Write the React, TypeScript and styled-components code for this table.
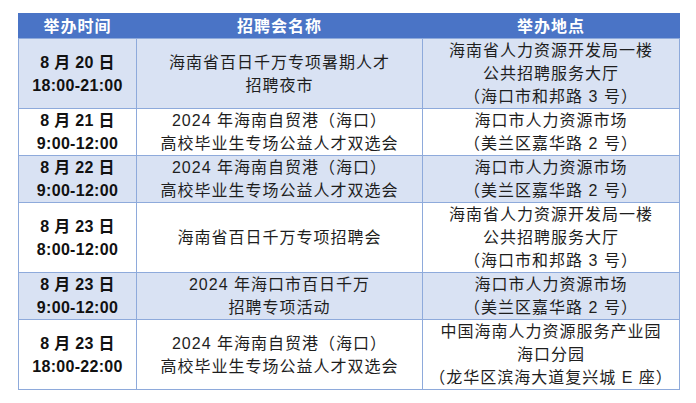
import styled, { createGlobalStyle } from "styled-components";

type Fair = {
    date: string;
    time: string;
    name: string[];
    place: string[];
};

const fairs: Fair[] = [
    {
        date: "8 月 20 日",
        time: "18:00-21:00",
        name: ["海南省百日千万专项暑期人才", "招聘夜市"],
        place: ["海南省人力资源开发局一楼", "公共招聘服务大厅", "（海口市和邦路 3 号）"],
    },
    {
        date: "8 月 21 日",
        time: "9:00-12:00",
        name: ["2024 年海南自贸港（海口）", "高校毕业生专场公益人才双选会"],
        place: ["海口市人力资源市场", "（美兰区嘉华路 2 号）"],
    },
    {
        date: "8 月 22 日",
        time: "9:00-12:00",
        name: ["2024 年海南自贸港（海口）", "高校毕业生专场公益人才双选会"],
        place: ["海口市人力资源市场", "（美兰区嘉华路 2 号）"],
    },
    {
        date: "8 月 23 日",
        time: "8:00-12:00",
        name: ["海南省百日千万专项招聘会"],
        place: ["海南省人力资源开发局一楼", "公共招聘服务大厅", "（海口市和邦路 3 号）"],
    },
    {
        date: "8 月 23 日",
        time: "9:00-12:00",
        name: ["2024 年海口市百日千万", "招聘专项活动"],
        place: ["海口市人力资源市场", "（美兰区嘉华路 2 号）"],
    },
    {
        date: "8 月 23 日",
        time: "18:00-22:00",
        name: ["2024 年海南自贸港（海口）", "高校毕业生专场公益人才双选会"],
        place: ["中国海南人力资源服务产业园", "海口分园", "（龙华区滨海大道复兴城 E 座）"],
    },
];

const GlobalStyle = createGlobalStyle`
    body {
        margin: 0;
        background: #ffffff;
        font-family: "Liberation Sans", "Noto Sans CJK SC", sans-serif;
    }
`;

function Lines({ items }: { items: string[] }) {
    return (
        <>
            {items.map((line, i) => (
                <Line key={i}>{line}</Line>
            ))}
        </>
    );
}

export default function App() {
    return (
        <>
            <GlobalStyle />
            <Page>
                <Table>
                    <colgroup>
                        <col style={{ width: 118 }} />
                        <col style={{ width: 286 }} />
                        <col style={{ width: 257 }} />
                    </colgroup>
                    <thead>
                        <tr>
                            <HeadCell>举办时间</HeadCell>
                            <HeadCell>招聘会名称</HeadCell>
                            <HeadCell>举办地点</HeadCell>
                        </tr>
                    </thead>
                    <tbody>
                        {fairs.map((fair, i) => (
                            <Row key={i} $shaded={i % 2 === 0}>
                                <TimeCell>
                                    <Line>{fair.date}</Line>
                                    <Line>{fair.time}</Line>
                                </TimeCell>
                                <Cell>
                                    <Lines items={fair.name} />
                                </Cell>
                                <Cell>
                                    <Lines items={fair.place} />
                                </Cell>
                            </Row>
                        ))}
                    </tbody>
                </Table>
            </Page>
        </>
    );
}

const Page = styled.div`
    padding: 13px 0 0 18px;
`;

const Table = styled.table`
    width: 661px;
    table-layout: fixed;
    border-collapse: collapse;
    border: 1px solid #8eaadb;
    color: #1e1e1e;
    font-size: 16px;
`;

const HeadCell = styled.th`
    background: #4a74c6;
    color: #ffffff;
    font-weight: bold;
    letter-spacing: 1px;
    line-height: 23px;
    height: 24px;
    padding: 0;
    text-align: center;
    border: 1px solid #4a74c6;
    border-bottom-color: #8eaadb;
`;

const Row = styled.tr<{ $shaded: boolean }>`
    background: ${(p) => (p.$shaded ? "#d9e2f3" : "#ffffff")};
`;

const Cell = styled.td`
    border: 1px solid #8eaadb;
    padding: 0;
    text-align: center;
    vertical-align: middle;
    line-height: 23px;
    letter-spacing: 1px;
    white-space: nowrap;
`;

const TimeCell = styled(Cell)`
    font-weight: bold;
    letter-spacing: 0.3px;
    color: #111111;
`;

const Line = styled.div`
    display: block;
`;
